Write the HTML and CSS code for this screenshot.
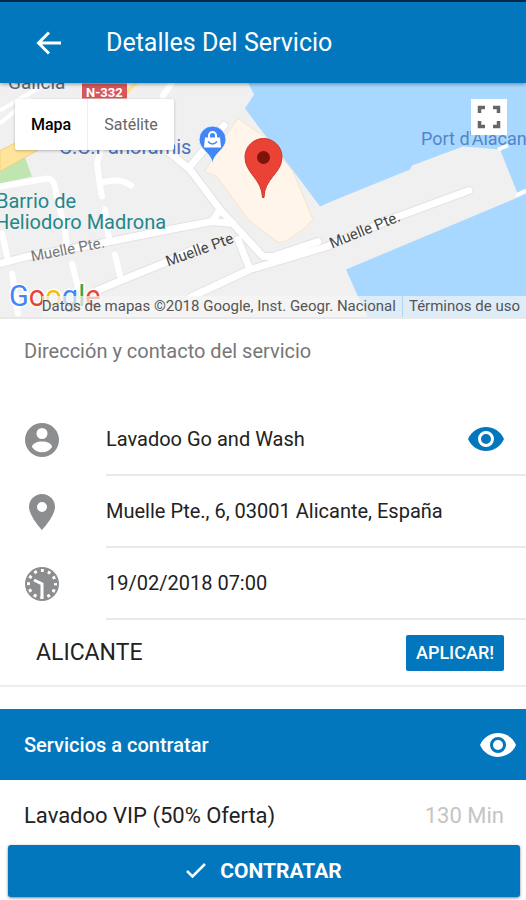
FILE: index.html
```html
<!DOCTYPE html>
<html lang="es">
<head>
    <meta charset="UTF-8">
    <meta name="viewport" content="width=device-width, initial-scale=1.0">
    <title>Detalles Del Servicio</title>
    <link rel="stylesheet" href="styles.css">
</head>
<body>

    <header class="toolbar">
        <button class="icon-button" aria-label="Volver">
            <svg width="26" height="24" viewBox="0 0 26 24" fill="none" stroke="#fff" stroke-width="3"><path d="M25 12H3M13 1.500L2.500 12L13 22.500"/></svg>
        </button>
        <h1>Detalles Del Servicio</h1>
    </header>

    <main class="content">
        <div class="map">
            <svg class="map-canvas" viewBox="0 83 526 235" preserveAspectRatio="xMidYMid slice">
                <rect x="0" y="83" width="526" height="235" fill="#f0f0f0"/>
                <!-- water -->
                <path fill="#a8d8ff" d="M248 83L254 95L245 109L263 133L293 171L320 207L336 200L410 170L412 166L463 147L500 150L518 195L526 190V83Z"/>
                <path fill="#a8d8ff" d="M526 194L513 200L346 270L358 297L368 318H526Z"/>
                <!-- park and main road -->
                <path fill="#bfe6b0" d="M0 170L25 158L32 177L0 184Z"/>
                <path fill="#ffe59b" stroke="#f3cf7c" d="M0 151L60 122V138L0 172Z"/>
                <path fill="none" stroke="#ffe59b" stroke-width="4" d="M137 82L121 99"/>
                <!-- mall -->
                <path fill="#fff5ea" stroke="#fbe3c6" d="M238 119L264 137L293 172L313 220L303 230L285 242L278 243L248 220L217 177L205 172L223 140Z"/>
                <!-- streets -->
                <g fill="none" stroke-linecap="round" stroke-linejoin="round">
                    <path id="streets" stroke="#e3e3e3" stroke-width="9" d="M0 264L27 257L100 244L170 230L212 222L233 224M97 291L121 281L163 264L200 247M190 298L250 270L327 247L390 220L469 191M167 151L190 170L220 210L263 257H273L318 242M190 167L224 126M220 210L212 222M238 240L250 270"/>
                    <path stroke="#fff" stroke-width="7" d="M0 264L27 257L100 244L170 230L212 222L233 224M97 291L121 281L163 264L200 247M190 298L250 270L327 247L390 220L469 191M167 151L190 170L220 210L263 257H273L318 242M190 167L224 126M220 210L212 222M238 240L250 270"/>
                    <path stroke="#fff" stroke-width="6" d="M0 187L47 179Q53 179 55 187L57 197L65 231L67 250M2 234L8 260M12 274L18 314M72 264L78 288M101 150L97 164L100 187L102 197M102 183Q120 178 131 186M105 210L109 240M115 255L121 280M172 83L163 96"/>
                </g>
                <g fill="none" stroke="#fff" stroke-width="4">
                    <path d="M0 111L48 83M0 124L30 99M498 150L508 146M516 196L526 191"/>
                </g>
                <!-- labels -->
                <g class="map-label">
                    <text x="8" y="89" fill="#5c6474" font-size="19">Galicia</text>
                    <rect x="82" y="84" width="45" height="15" fill="#d7565a"/>
                    <text x="86" y="97" fill="#fff" font-size="13" font-weight="700">N-332</text>
                    <text x="59" y="154" fill="#4b73bd" font-size="20">C.C.Panoramis</text>
                    <text x="421" y="145" fill="#5385cb" font-size="18">Port d'Alacant</text>
                    <text x="-4" y="208" fill="#24868b" font-size="20">Barrio de</text>
                    <text x="-5" y="229" fill="#24868b" font-size="20">Heliodoro Madrona</text>
                    <text x="32" y="262" fill="#777" font-size="15" transform="rotate(-11 32 262)">Muelle Pte.</text>
                    <text x="168" y="267" fill="#444" font-size="15" transform="rotate(-20 168 267)">Muelle Pte</text>
                    <text x="332" y="249" fill="#444" font-size="15" transform="rotate(-22 332 249)">Muelle Pte.</text>
                </g>
                <!-- shop pin -->
                <path fill="#4285f4" stroke="#e8f0fc" d="M212.500 164C211 153 199 150 199 140A13.500 13.500 0 0 1 226 140C226 150 214 153 212.500 164Z"/>
                <path fill="#fff" d="M205 138H220L221 148H204Z"/>
                <path fill="none" stroke="#fff" stroke-width="2" d="M209 139V136A3.500 3.500 0 0 1 216 136V139"/>
                <path fill="none" stroke="#4285f4" stroke-width="1.500" d="M208 142Q212.500 147 217 142"/>
                <!-- service pin -->
                <path fill="#ea4335" stroke="#c8382c" d="M262.500 198C262 179 245 174 245 157.500A18.500 18.500 0 0 1 282 157.500C282 174 264 179 264 198Z"/>
                <circle cx="263.500" cy="158" r="6.500" fill="#80120c"/>
                <!-- logo -->
                <g class="map-label">
                    <text x="9" y="306" font-size="29" stroke="#fff" stroke-width="3" paint-order="stroke"><tspan fill="#4285f4">G</tspan><tspan fill="#ea4335">o</tspan><tspan fill="#fbbc05">o</tspan><tspan fill="#4285f4">g</tspan><tspan fill="#34a853">l</tspan><tspan fill="#ea4335">e</tspan></text>
                </g>
            </svg>
            <div class="map-types">
                <button class="active">Mapa</button>
                <button>Satélite</button>
            </div>
            <button class="fullscreen" aria-label="Pantalla completa">
                <svg width="24" height="24" viewBox="0 0 24 24" fill="none" stroke="#666" stroke-width="3.500"><path d="M2.500 8V2.500H8M16 2.500H21.500V8M21.500 16V21.500H16M8 21.500H2.500V16"/></svg>
            </button>
            <div class="attribution">
                <span>Datos de mapas ©2018 Google, Inst. Geogr. Nacional</span>
                <a href="#">Términos de uso</a>
            </div>
        </div>

        <h2 class="list-header">Dirección y contacto del servicio</h2>

        <ul class="details">
            <li>
                <svg class="item-icon" width="36" height="36" viewBox="0 0 36 36"><circle cx="18" cy="18" r="17" fill="#8b8d8f"/><circle cx="18" cy="11.500" r="5.500" fill="#fff"/><path fill="#fff" d="M8 25C8 17.500 28 17.500 28 25C24 32 12 32 8 25Z"/></svg>
                <div class="item-inner">
                    <span>Lavadoo Go and Wash</span>
                    <button class="icon-button" aria-label="Ver contacto">
                        <svg width="36" height="26" viewBox="0 0 36 26"><path fill="#0277bd" d="M0 13C7-3 29-3 36 13C29 29 7 29 0 13Z"/><circle cx="18" cy="13" r="6.500" fill="#0277bd" stroke="#fff" stroke-width="3"/></svg>
                    </button>
                </div>
            </li>
            <li>
                <svg class="item-icon" width="36" height="36" viewBox="0 0 36 36"><path fill="#8b8d8f" fill-rule="evenodd" d="M18 0A13 13 0 0 0 5 13C5 22 18 36 18 36S31 22 31 13A13 13 0 0 0 18 0ZM18 8A5 5 0 1 1 18 18A5 5 0 0 1 18 8Z"/></svg>
                <div class="item-inner"><span>Muelle Pte., 6, 03001 Alicante, España</span></div>
            </li>
            <li>
                <svg class="item-icon" width="36" height="36" viewBox="0 0 36 36"><circle cx="18" cy="18" r="17" fill="#8b8d8f"/><circle cx="18" cy="18" r="13.500" fill="none" stroke="#fff" stroke-width="3" stroke-dasharray="3 4.069" stroke-dashoffset="1.500"/><path fill="none" stroke="#fff" stroke-width="3" d="M10 14L18 18V32"/></svg>
                <div class="item-inner"><span>19/02/2018 07:00</span></div>
            </li>
        </ul>

        <div class="coupon">
            <span>ALICANTE</span>
            <button class="apply">APLICAR!</button>
        </div>

        <div class="services-header">
            <h2>Servicios a contratar</h2>
            <button class="icon-button" aria-label="Ver servicios">
                <svg width="36" height="26" viewBox="0 0 36 26"><path fill="#fff" d="M0 13C7-3 29-3 36 13C29 29 7 29 0 13Z"/><circle cx="18" cy="13" r="6.500" fill="#fff" stroke="#0277bd" stroke-width="3"/></svg>
            </button>
        </div>
        <div class="service">
            <span>Lavadoo VIP (50% Oferta)</span>
            <span class="duration">130 Min</span>
        </div>
    </main>

    <footer class="footer">
        <button class="submit">
            <svg width="20" height="16" viewBox="0 0 20 16" fill="none" stroke="#fff" stroke-width="2.500"><path d="M1 8L6.500 13.500L19 1"/></svg>
            CONTRATAR
        </button>
    </footer>

</body>
</html>
```
FILE: styles.css
```css
* {
    box-sizing: border-box;
}

body {
    margin: 0;
    height: 100vh;
    display: flex;
    flex-direction: column;
    font-family: Roboto, sans-serif;
    font-size: 20px;
    color: #222;
    background-color: #fff;
}

button {
    font-family: inherit;
    border: none;
    padding: 0;
    cursor: pointer;
}

h1, h2 {
    margin: 0;
}

.icon-button {
    display: flex;
    background: none;
}

.toolbar {
    display: flex;
    flex-shrink: 0;
    align-items: center;
    gap: 44px;
    height: 83px;
    padding: 0 36px;
    border-top: 2px solid #01294a;
    background-color: #0277bd;
    color: #fff;
    box-shadow: 0 1px 4px rgba(0, 0, 0, 0.4);
    z-index: 2;
}

.toolbar h1 {
    font-size: 25px;
    font-weight: 400;
}

.content {
    flex: 1;
    min-height: 0;
    overflow: hidden;
}

.map {
    position: relative;
    height: 236px;
    border-bottom: 2px solid #e8e8e8;
}

.map-canvas {
    display: block;
    width: 100%;
    height: 100%;
}

.map-label {
    font-family: Roboto, sans-serif;
}

.map-types {
    position: absolute;
    top: 16px;
    left: 15px;
    display: flex;
    border-radius: 2px;
    background-color: #fff;
    box-shadow: 0 1px 3px rgba(0, 0, 0, 0.25);
}

.map-types button {
    height: 51px;
    padding: 0 16px;
    background: none;
    font-size: 16px;
    color: #666;
}

.map-types .active {
    border-right: 1px solid #eee;
    font-weight: 500;
    color: #000;
}

.fullscreen {
    position: absolute;
    top: 16px;
    right: 19px;
    display: flex;
    align-items: center;
    justify-content: center;
    width: 36px;
    height: 36px;
    background-color: #fff;
}

.attribution {
    position: absolute;
    right: 0;
    bottom: 0;
    display: flex;
    height: 21px;
    line-height: 20px;
    font-size: 15px;
    white-space: nowrap;
    color: #555;
    background-color: rgba(245, 245, 245, 0.7);
}

.attribution span {
    padding-right: 6px;
}

.attribution a {
    padding: 0 6px;
    border-left: 1px solid #b5d5ea;
    color: #555;
    text-decoration: none;
}

.list-header {
    height: 85px;
    padding: 20px 24px;
    line-height: 24px;
    font-size: 20px;
    font-weight: 400;
    color: #777;
}

.details {
    margin: 0;
    padding: 0;
    list-style: none;
}

.details li {
    display: flex;
    align-items: center;
    padding-left: 24px;
}

.item-icon {
    flex-shrink: 0;
    margin-right: 46px;
}

.item-inner {
    display: flex;
    flex: 1;
    align-items: center;
    justify-content: space-between;
    height: 72px;
    padding-right: 22px;
    border-bottom: 2px solid #eaeaea;
}

.coupon {
    display: flex;
    align-items: center;
    justify-content: space-between;
    height: 67px;
    padding: 0 22px 0 36px;
    border-bottom: 2px solid #eee;
    font-size: 23px;
}

.apply {
    height: 36px;
    padding: 0 10px;
    border-radius: 2px;
    background-color: #0277bd;
    color: #fff;
    font-size: 18px;
    font-weight: 500;
}

.services-header {
    display: flex;
    align-items: center;
    justify-content: space-between;
    height: 71px;
    margin-top: 22px;
    padding: 0 10px 0 24px;
    background-color: #0277bd;
    color: #fff;
}

.services-header h2 {
    font-size: 20px;
    font-weight: 500;
}

.service {
    display: flex;
    align-items: center;
    justify-content: space-between;
    height: 71px;
    padding: 0 22px 0 24px;
    font-size: 22px;
}

.duration {
    color: #c4c4c4;
}

.footer {
    flex-shrink: 0;
    padding: 0 6px 3px 8px;
    z-index: 1;
}

.submit {
    display: flex;
    align-items: center;
    justify-content: center;
    gap: 14px;
    width: 100%;
    height: 52px;
    border-radius: 3px;
    background-color: #0277bd;
    color: #fff;
    font-size: 21px;
    font-weight: 700;
    box-shadow: 0 1px 3px rgba(0, 0, 0, 0.5);
}
```
